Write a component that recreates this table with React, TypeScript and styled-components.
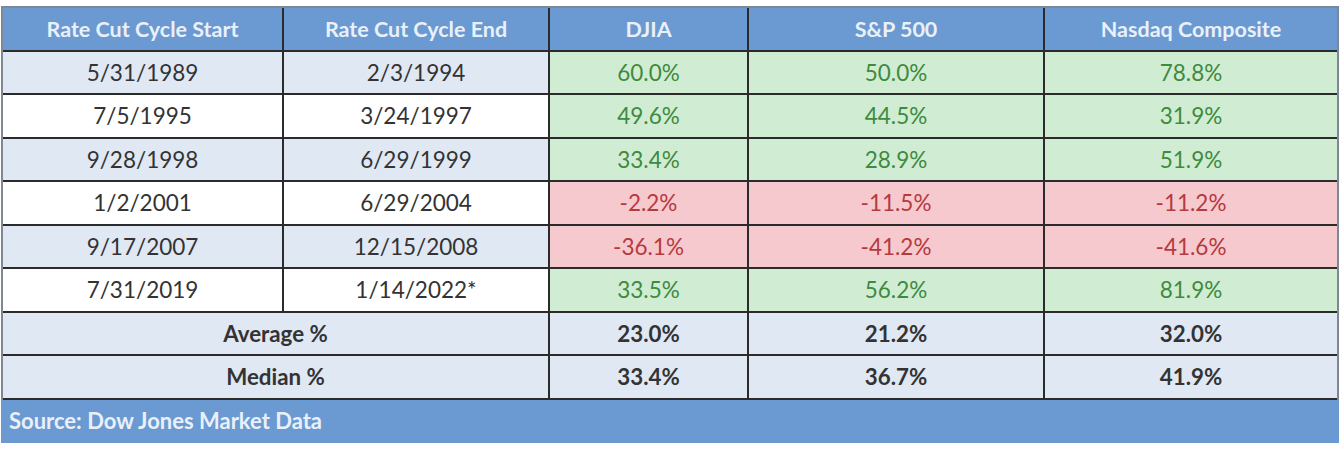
import React from "react";
import styled, { createGlobalStyle, css } from "styled-components";

const GlobalStyle = createGlobalStyle`
  html, body { margin: 0; padding: 0; background: #ffffff; }
  body { font-family: Lato, "Open Sans", "Liberation Sans", sans-serif; }
`;

const Page = styled.div`
  padding: 6px 0 0 1px;
`;

const Table = styled.div`
  display: grid;
  grid-template-columns: 279px 264px 197px 294px 292px;
  grid-auto-rows: 41.5px;
  gap: 2px;
  width: max-content;
  background: #2b2b2b;
  border: 2px solid #7d8796;
`;

type Tone = "head" | "blue" | "white" | "green" | "red" | "source";

const bg: Record<Tone, string> = {
  head: "#6a9ad1",
  blue: "#dfe8f3",
  white: "#ffffff",
  green: "#d0edd3",
  red: "#f6c9cf",
  source: "#6a9ad1",
};

const fg: Record<Tone, string> = {
  head: "#eaf0f9",
  blue: "#333333",
  white: "#333333",
  green: "#3e8a3e",
  red: "#b53a3e",
  source: "#eaf0f9",
};

const Cell = styled.div<{ $tone: Tone; $span?: number; $bold?: boolean }>`
  display: flex;
  align-items: center;
  justify-content: center;
  background: ${(p) => bg[p.$tone]};
  color: ${(p) => fg[p.$tone]};
  font-size: ${(p) => (p.$bold ? "22.3px" : "22.5px")};
  font-weight: ${(p) => (p.$bold ? 700 : 400)};
  white-space: nowrap;
  ${(p) =>
    p.$span &&
    css`
      grid-column: span ${p.$span};
    `}
`;

const HeadCell = styled(Cell)`
  font-size: 21.5px;
  font-weight: 700;
`;

const SourceCell = styled(Cell)`
  justify-content: flex-start;
  padding-left: 8px;
  font-size: 22px;
  font-weight: 700;
  grid-column: 1 / -1;
  margin: 0 -2px -2px -2px;
  padding-bottom: 2px;
`;

const headers = [
  "Rate Cut Cycle Start",
  "Rate Cut Cycle End",
  "DJIA",
  "S&P 500",
  "Nasdaq Composite",
];

const rows: [string, string, string, string, string][] = [
  ["5/31/1989", "2/3/1994", "60.0%", "50.0%", "78.8%"],
  ["7/5/1995", "3/24/1997", "49.6%", "44.5%", "31.9%"],
  ["9/28/1998", "6/29/1999", "33.4%", "28.9%", "51.9%"],
  ["1/2/2001", "6/29/2004", "-2.2%", "-11.5%", "-11.2%"],
  ["9/17/2007", "12/15/2008", "-36.1%", "-41.2%", "-41.6%"],
  ["7/31/2019", "1/14/2022*", "33.5%", "56.2%", "81.9%"],
];

const summary: [string, string, string, string][] = [
  ["Average %", "23.0%", "21.2%", "32.0%"],
  ["Median %", "33.4%", "36.7%", "41.9%"],
];

export default function App() {
  return (
    <>
      <GlobalStyle />
      <Page>
        <Table>
          {headers.map((h) => (
            <HeadCell key={h} $tone="head">
              {h}
            </HeadCell>
          ))}
          {rows.map((r, i) => {
            const base: Tone = i % 2 === 0 ? "blue" : "white";
            return (
              <React.Fragment key={r[0]}>
                <Cell $tone={base}>{r[0]}</Cell>
                <Cell $tone={base}>{r[1]}</Cell>
                {r.slice(2).map((v, j) => (
                  <Cell key={j} $tone={v.startsWith("-") ? "red" : "green"}>
                    {v}
                  </Cell>
                ))}
              </React.Fragment>
            );
          })}
          {summary.map((s) => (
            <React.Fragment key={s[0]}>
              <Cell $tone="blue" $span={2} $bold>
                {s[0]}
              </Cell>
              {s.slice(1).map((v, j) => (
                <Cell key={j} $tone="blue" $bold>
                  {v}
                </Cell>
              ))}
            </React.Fragment>
          ))}
          <SourceCell $tone="source">Source: Dow Jones Market Data</SourceCell>
        </Table>
      </Page>
    </>
  );
}
